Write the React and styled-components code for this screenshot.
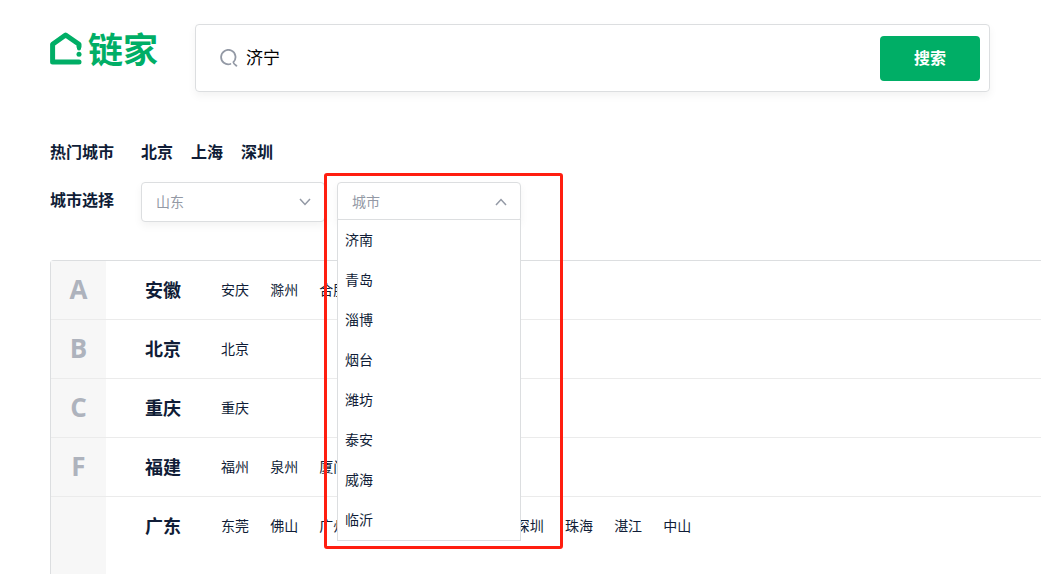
import React, { useState } from "react";
import styled, { createGlobalStyle } from "styled-components";

const hotCities = ["北京", "上海", "深圳"];

const provinces = ["山东", "安徽", "北京", "重庆", "福建", "广东"];

const shandongCities = [
  "济南",
  "青岛",
  "淄博",
  "烟台",
  "潍坊",
  "泰安",
  "威海",
  "临沂",
];

const groups = [
  { letter: "A", province: "安徽", cities: ["安庆", "滁州", "合肥"] },
  { letter: "B", province: "北京", cities: ["北京"] },
  { letter: "C", province: "重庆", cities: ["重庆"] },
  { letter: "F", province: "福建", cities: ["福州", "泉州", "厦门"] },
  {
    letter: "",
    province: "广东",
    cities: [
      "东莞",
      "佛山",
      "广州",
      "惠州",
      "江门",
      "清远",
      "深圳",
      "珠海",
      "湛江",
      "中山",
    ],
  },
];

const Chevron = ({ up }) => (
  <ChevronIcon viewBox="0 0 12 8" aria-hidden="true">
    <path d={up ? "M1 7 L6 1.5 L11 7" : "M1 1 L6 6.5 L11 1"} />
  </ChevronIcon>
);

const Logo = () => (
  <LogoLink href="#" aria-label="链家">
    <LogoMark viewBox="0 0 32 33" aria-hidden="true">
      <path d="M29 14.4 V12.2 L15.6 3 L2.6 12.2 V29.9 H29" />
      <path className="tip" d="M29 13 V16.6" />
      <circle cx="29" cy="22.3" r="2.5" />
    </LogoMark>
    <span>链家</span>
  </LogoLink>
);

const App = () => {
  const [keyword, setKeyword] = useState("济宁");
  const [province, setProvince] = useState("山东");
  const [city, setCity] = useState("城市");
  const [open, setOpen] = useState(true);

  const chooseCity = (name) => {
    setCity(name);
    setOpen(false);
  };

  return (
    <Page>
      <GlobalStyle />
      <Header>
        <Logo />
        <SearchForm onSubmit={(e) => e.preventDefault()}>
          <SearchIcon viewBox="0 0 18 20" aria-hidden="true">
            <path d="M10.4 15 A7.2 7.2 0 1 1 13.4 13.2 C13.2 14.4 14.6 15.4 16.4 16.8" />
          </SearchIcon>
          <SearchInput
            aria-label="搜索城市"
            value={keyword}
            onChange={(e) => setKeyword(e.target.value)}
          />
          <SearchButton type="submit">搜索</SearchButton>
        </SearchForm>
      </Header>

      <HotRow>
        <RowLabel>热门城市</RowLabel>
        {hotCities.map((name) => (
          <HotLink href="#" key={name}>
            {name}
          </HotLink>
        ))}
      </HotRow>

      <PickerRow>
        <RowLabel as="label" htmlFor="province">
          城市选择
        </RowLabel>
        <Picker>
          <ProvinceSelect
            id="province"
            value={province}
            onChange={(e) => setProvince(e.target.value)}
          >
            {provinces.map((name) => (
              <option key={name}>{name}</option>
            ))}
          </ProvinceSelect>
          <Chevron />
        </Picker>
        <Picker>
          <CityButton
            type="button"
            aria-haspopup="listbox"
            aria-expanded={open}
            onClick={() => setOpen((prev) => !prev)}
          >
            {city}
          </CityButton>
          <Chevron up={open} />
          {open && (
            <CityMenu role="listbox" aria-label="城市">
              {shandongCities.map((name) => (
                <CityOption
                  role="option"
                  aria-selected={name === city}
                  key={name}
                  onClick={() => chooseCity(name)}
                >
                  {name}
                </CityOption>
              ))}
            </CityMenu>
          )}
          <Highlight />
        </Picker>
      </PickerRow>

      <CityTable>
        {groups.map((group) => (
          <Group key={group.province}>
            <Letter>{group.letter}</Letter>
            <Province>{group.province}</Province>
            <Cities>
              {group.cities.map((name) => (
                <React.Fragment key={name}>
                  <CityLink href="#">{name}</CityLink>{" "}
                </React.Fragment>
              ))}
            </Cities>
          </Group>
        ))}
      </CityTable>
    </Page>
  );
};

export default App;

// Style
const GlobalStyle = createGlobalStyle`
  * {
    box-sizing: border-box;
  }

  body {
    margin: 0;
    background: #fff;
    color: #101d37;
    font-family: "Noto Sans CJK SC", "Open Sans", sans-serif;
    font-size: 14px;
  }

  a {
    color: inherit;
    text-decoration: none;
  }

  button, input, select {
    font-family: inherit;
  }
`;

const Page = styled.div`
  display: flex;
  flex-direction: column;
  min-height: 100vh;
  padding: 24px 0 0 50px;
`;

const Header = styled.header`
  display: flex;
  align-items: flex-start;
  padding-right: 51px;
`;

const LogoLink = styled.a`
  display: flex;
  flex: none;
  align-items: center;
  gap: 6px;
  width: 145px;
  height: 48px;
  color: #00ae66;
  font-size: 35px;
  font-weight: 700;
  line-height: 48px;
`;

const LogoMark = styled.svg`
  width: 32px;
  height: 33px;
  fill: #00ae66;

  path {
    fill: none;
    stroke: #00ae66;
    stroke-width: 5;
    stroke-linecap: round;
    stroke-linejoin: round;
  }

  .tip {
    stroke-width: 4;
  }
`;

const SearchForm = styled.form`
  display: flex;
  flex: 1;
  align-items: center;
  padding: 11px 9px 10px 24px;
  border: 1px solid #dcdee0;
  border-radius: 4px;
  box-shadow: 0 4px 8px rgba(0, 0, 0, 0.05);
`;

const SearchIcon = styled.svg`
  flex: none;
  width: 18px;
  height: 20px;
  fill: none;
  stroke: #9399a5;
  stroke-width: 1.8;
  stroke-linecap: round;
`;

const SearchInput = styled.input`
  flex: 1;
  min-width: 0;
  padding: 0 8px 4px;
  border: 0;
  outline: 0;
  background: none;
  color: #000;
  font-size: 17px;
  line-height: 24px;
`;

const SearchButton = styled.button`
  width: 100px;
  height: 45px;
  padding: 0 0 3px;
  border: 0;
  border-radius: 4px;
  background: #00ae66;
  color: #fff;
  font-size: 16px;
  font-weight: 700;
`;

const HotRow = styled.div`
  display: flex;
  margin-top: 48px;
  padding-bottom: 2px;
  font-size: 16px;
  font-weight: 700;
  line-height: 22px;
`;

const RowLabel = styled.span`
  flex: none;
  width: 91px;
`;

const HotLink = styled.a`
  margin-right: 18px;
`;

const PickerRow = styled.div`
  display: flex;
  margin-top: 18px;
  font-size: 16px;
  font-weight: 700;
  line-height: 34px;
`;

const Picker = styled.div`
  position: relative;
  width: 184px;
  height: 40px;
  margin-right: 12px;
  font-size: 14px;
  font-weight: 400;
`;

const ProvinceSelect = styled.select`
  appearance: none;
  width: 100%;
  height: 40px;
  padding: 0 14px 2px;
  border: 1px solid #dcdee0;
  border-radius: 4px;
  box-shadow: 0 4px 8px rgba(0, 0, 0, 0.05);
  background: #fff;
  color: #9399a5;
  font-size: 14px;
`;

const CityButton = styled.button`
  width: 100%;
  height: 40px;
  padding: 0 14px 2px;
  border: 1px solid #dcdee0;
  border-radius: 4px;
  box-shadow: 0 4px 8px rgba(0, 0, 0, 0.05);
  background: #fff;
  color: #9399a5;
  font-size: 14px;
  text-align: left;
`;

const ChevronIcon = styled.svg`
  position: absolute;
  top: 16px;
  right: 14px;
  width: 12px;
  height: 8px;
  fill: none;
  stroke: #9399a5;
  stroke-width: 1.5;
  pointer-events: none;
`;

const CityMenu = styled.ul`
  position: absolute;
  top: 37px;
  left: 0;
  z-index: 2;
  width: 100%;
  margin: 0;
  padding: 0;
  border: 1px solid #dcdee0;
  background: #fff;
  list-style: none;
`;

const CityOption = styled.li`
  height: 40px;
  padding: 0 7px;
  line-height: 38px;
  cursor: pointer;
`;

const Highlight = styled.div`
  position: absolute;
  top: -9px;
  left: -13px;
  z-index: 3;
  width: 239px;
  height: 376px;
  border: 3px solid #ff1e10;
  border-radius: 3px;
  pointer-events: none;
`;

const CityTable = styled.main`
  display: flex;
  flex: 1;
  flex-direction: column;
  margin-top: 38px;
  border: 1px solid #dcdee0;
  border-width: 1px 0 0 1px;
  border-radius: 4px 0 0 0;
`;

const Group = styled.section`
  display: flex;
  min-height: 59px;
  border-bottom: 1px solid #ebebeb;
  line-height: 56px;

  &:last-child {
    flex: 1;
    border-bottom: 0;
  }
`;

const Letter = styled.div`
  flex: none;
  width: 55px;
  background: #f7f7f7;
  color: #aeb3bd;
  font-family: "Open Sans", sans-serif;
  font-size: 26px;
  font-weight: 700;
  text-align: center;
`;

const Province = styled.h2`
  flex: none;
  width: 76px;
  margin: 0 0 0 39px;
  font-size: 18px;
  font-weight: 700;
`;

const Cities = styled.div`
  flex: 1;
`;

const CityLink = styled.a`
  margin-right: 18px;
`;
